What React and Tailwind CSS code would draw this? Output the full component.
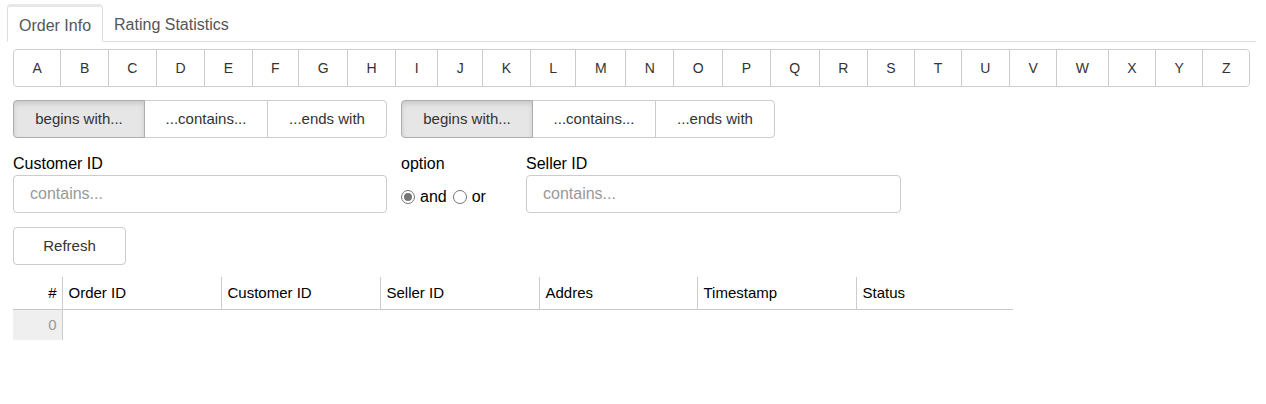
import React, { useState } from 'react';

const LETTERS = 'ABCDEFGHIJKLMNOPQRSTUVWXYZ'.split('');
const MODES = ['begins with...', '...contains...', '...ends with'];
const COLUMNS = [
    { name: 'Order ID', w: 'w-[159px]' },
    { name: 'Customer ID', w: 'w-[159px]' },
    { name: 'Seller ID', w: 'w-[159px]' },
    { name: 'Addres', w: 'w-[158px]' },
    { name: 'Timestamp', w: 'w-[159px]' },
    { name: 'Status', w: 'w-[157px]' },
];

function ModeGroup({ value, onChange }) {
    return (
        <div className="flex w-[374px] h-[38px]">
            {MODES.map((m, i) => {
                const active = value === i;
                return (
                    <button
                        key={m}
                        onClick={() => onChange(i)}
                        className={`h-full text-[15px] text-[#333] border ${i === 0 ? 'w-[132px] rounded-l' : i === 1 ? 'w-[124px] -ml-px' : 'flex-1 -ml-px rounded-r'} ${active ? 'bg-[#e6e6e6] border-[#adadad] shadow-[inset_0_3px_5px_rgba(0,0,0,0.125)] z-10' : 'bg-white border-[#ccc]'}`}
                    >
                        {m}
                    </button>
                );
            })}
        </div>
    );
}

function Radio({ checked, label, onClick }) {
    return (
        <label onClick={onClick} className="flex items-center gap-[5px] cursor-pointer">
            <span className="w-[14px] h-[14px] rounded-full border border-[#767676] flex items-center justify-center">
                {checked && <span className="w-[8px] h-[8px] rounded-full bg-[#767676]" />}
            </span>
            <span className="text-[16px] text-black">{label}</span>
        </label>
    );
}

export default function App() {
    const [tab, setTab] = useState(0);
    const [modeA, setModeA] = useState(0);
    const [modeB, setModeB] = useState(0);
    const [op, setOp] = useState('and');

    const tabCls = (active) => `px-[11px] pt-[3px] h-[38px] text-[16px] text-[#555] rounded-t ${active ? 'bg-white border border-[#ddd] border-t-[3px] border-t-[#e8e8e8] border-b-white' : ''}`;

    return (
        <div className="w-[1266px] h-[404px] bg-white pl-[7px] pr-[10px] pt-[4px]" style={{ fontFamily: '"Liberation Sans", Arial, sans-serif' }}>
            <div className="flex border-b border-[#ddd] h-[38px]">
                <button onClick={() => setTab(0)} className={tabCls(tab === 0)}>Order Info</button>
                <button onClick={() => setTab(1)} className={tabCls(tab === 1)}>Rating Statistics</button>
            </div>

            <div className="px-[6px] pt-[7px]">
                <div className="flex h-[38px] border border-[#ccc] rounded">
                    {LETTERS.map((l, i) => (
                        <button key={l} className={`flex-auto px-[4px] text-[14px] text-[#333] bg-white ${i > 0 ? 'border-l border-[#ccc]' : 'rounded-l'} ${i === LETTERS.length - 1 ? 'rounded-r' : ''}`}>
                            {l}
                        </button>
                    ))}
                </div>

                <div className="flex gap-[14px] mt-[13px]">
                    <ModeGroup value={modeA} onChange={setModeA} />
                    <ModeGroup value={modeB} onChange={setModeB} />
                </div>

                <div className="flex mt-[14px]">
                    <div className="w-[374px]">
                        <div className="text-[16px] text-black leading-[18px] pt-[3px]">Customer ID</div>
                        <input placeholder="contains..." className="mt-[2px] w-full h-[38px] border border-[#ccc] rounded px-[16px] text-[16px] placeholder:text-[#999] outline-none" />
                    </div>
                    <div className="ml-[14px] w-[125px]">
                        <div className="text-[16px] text-black leading-[18px] pt-[3px]">option</div>
                        <div className="flex items-center gap-[6px] mt-[12px]">
                            <Radio checked={op === 'and'} label="and" onClick={() => setOp('and')} />
                            <Radio checked={op === 'or'} label="or" onClick={() => setOp('or')} />
                        </div>
                    </div>
                    <div className="w-[375px]">
                        <div className="text-[16px] text-black leading-[18px] pt-[3px]">Seller ID</div>
                        <input placeholder="contains..." className="mt-[2px] w-full h-[38px] border border-[#ccc] rounded px-[16px] text-[16px] placeholder:text-[#999] outline-none" />
                    </div>
                </div>

                <button className="mt-[14px] w-[113px] h-[38px] border border-[#ccc] rounded bg-white text-[15px] text-[#333]">Refresh</button>

                <table className="mt-[12px] w-[1000px] table-fixed border-collapse text-[15px] text-black">
                    <thead>
                        <tr className="h-[32px] border-b border-[#c8c8c8]">
                            <th className="w-[49px] font-normal text-right pr-[5px] border-r border-[#ccc]">#</th>
                            {COLUMNS.map((c, i) => (
                                <th key={c.name} className={`${c.w} font-normal text-left pl-[6px] ${i < COLUMNS.length - 1 ? 'border-r border-[#ccc]' : ''}`}>{c.name}</th>
                            ))}
                        </tr>
                    </thead>
                    <tbody>
                        <tr className="h-[31px]">
                            <td className="bg-[#efefef] text-right pr-[5px] text-[#999] border-r border-[#ccc]">0</td>
                            {COLUMNS.map(c => <td key={c.name} />)}
                        </tr>
                    </tbody>
                </table>
            </div>
        </div>
    );
}
